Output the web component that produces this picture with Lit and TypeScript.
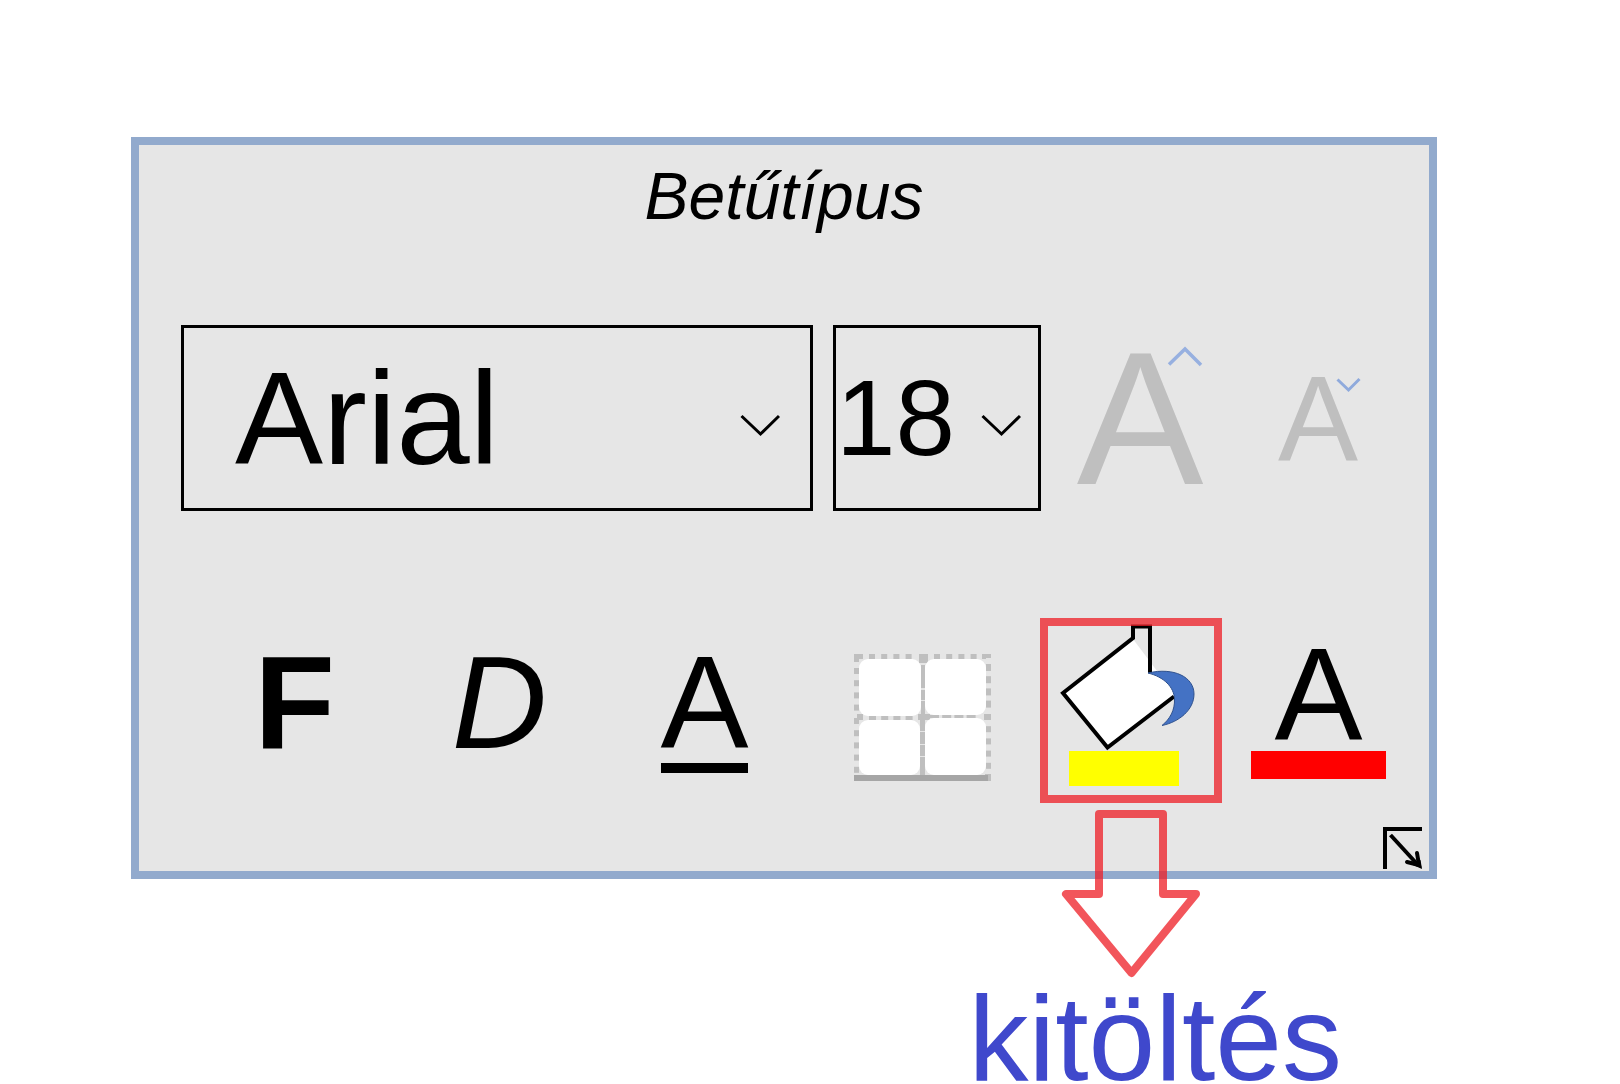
import { LitElement, html, css, svg } from "lit";
import { customElement, state } from "lit/decorators.js";

const range = (n: number) => Array.from({ length: n }, (_, i) => i);

@customElement("app-root")
export class AppRoot extends LitElement {
  static styles = css`
    :host {
      display: block;
      font-family: "Liberation Sans", Arial, sans-serif;
      color: #000;
      background: #fff;
    }
    .page {
      padding: 137px 183px 0 131px;
    }
    .panel {
      display: flex;
      flex-direction: column;
      padding: 13px 0 2px;
      border: 8px solid #92aacd;
      background: #e6e6e6;
    }
    .title {
      margin: 0 0 91px;
      text-align: center;
      font-size: 66px;
      line-height: 76px;
      font-weight: 400;
      font-style: italic;
    }
    .row {
      display: flex;
    }
    .fonts {
      gap: 20px;
      padding: 0 32px 0 42px;
      margin-bottom: 107px;
    }
    .styles {
      gap: 12px;
      padding: 0 28px 0 53px;
      margin-bottom: 24px;
    }
    .field {
      display: grid;
      height: 186px;
    }
    .field > * {
      grid-area: 1 / 1;
    }
    .family {
      flex: 1;
      font-size: 132px;
    }
    .size {
      width: 208px;
      font-size: 107px;
    }
    select {
      appearance: none;
      box-sizing: border-box;
      width: 100%;
      height: 100%;
      margin: 0;
      padding: 0;
      border: 3px solid #000;
      border-radius: 0;
      background: transparent;
      color: inherit;
      font: inherit;
    }
    .family select {
      padding-left: 51px;
    }
    .chevron {
      align-self: center;
      justify-self: end;
      margin-right: 20px;
      pointer-events: none;
    }
    .family .chevron {
      margin-right: 33px;
    }
    button {
      display: flex;
      flex-direction: column;
      align-items: center;
      margin: 0;
      padding: 0;
      border: 0;
      background: transparent;
      color: inherit;
      font: inherit;
      cursor: pointer;
    }
    .resize {
      position: relative;
      justify-content: center;
      width: 158px;
      color: #bfbfbf;
      font-size: 120px;
      line-height: 186px;
    }
    .grow {
      font-size: 190px;
    }
    .hat {
      position: absolute;
      top: 21px;
      right: 16px;
    }
    .resize:not(.grow) .hat {
      top: 52px;
      right: 36px;
    }
    .letters {
      display: grid;
      grid-template-columns: repeat(3, 1fr);
      flex: 1;
    }
    .colours {
      display: flex;
      gap: 14px;
    }
    .tool {
      padding-top: 37px;
      font-size: 132px;
      line-height: 96px;
    }
    .bold {
      font-weight: 700;
    }
    .italic {
      font-style: italic;
    }
    .bar {
      width: 87px;
      height: 10px;
      margin-top: 12px;
      background: #000;
    }
    .borders {
      width: 207px;
      padding-top: 36px;
    }
    .colour {
      width: 165px;
      padding-top: 29px;
    }
    .colour .bar {
      width: 135px;
      height: 28px;
      margin-top: 8px;
      background: #f00;
    }
    .marked {
      position: relative;
      width: 182px;
      height: 185px;
    }
    .marked::after {
      content: "";
      position: absolute;
      inset: 0;
      border: 8px solid rgba(237, 28, 36, 0.75);
      pointer-events: none;
    }
    .arrow {
      position: absolute;
      top: 100%;
      left: 19px;
      pointer-events: none;
    }
    .launcher {
      align-self: flex-end;
      margin-right: 7px;
    }
    svg {
      display: block;
    }
    .caption {
      margin: 116px 95px 0 0;
      text-align: right;
      color: #3f48cc;
      font-size: 120px;
      line-height: 86px;
    }
  `;

  @state() private family = "Arial";
  @state() private size = "18";

  private chevron() {
    return html`<svg class="chevron" width="40" height="38" viewBox="0 0 40 38" aria-hidden="true">
      <path d="M1.5 17 L20.5 35 L39 17" fill="none" stroke="#000" stroke-width="3" />
    </svg>`;
  }

  private bordersIcon() {
    return html`<svg width="137" height="127" viewBox="0 0 137 127" aria-hidden="true">
      <g fill="#bfbfbf">
        ${range(4).map(
          (i) => svg`
            <rect x=${15 + i * 12.2} y="0" width="6" height="5" />
            <rect x=${80 + i * 12.2} y="0" width="6" height="5" />
            <rect x=${15 + i * 12.2} y="62" width="7" height="4" />
            <rect x=${76 + i * 12.2} y="61" width="9" height="3" />
            <rect x="0" y=${14 + i * 12.2} width="5" height="6" />
            <rect x="132" y=${10 + i * 12.2} width="5" height="7" />`
        )}
        ${range(5).map(
          (i) => svg`
            <rect x="0" y=${64 + i * 12.2} width="5" height="6" />
            <rect x="132" y=${60 + i * 12.2} width="5" height="6" />`
        )}
        <path d="M0 0H9V5H5V8H0Z M128 0H137V4H132V5H128Z M3 60H9V66H3Z M130 60H137V66H130Z" />
        <path d="M65 0H74V9H65Z M67 11H71V34H67Z M67 36H71V46H67Z M67 47H71V60H67Z" />
        <path d="M64 60H76V66H71V77H66V66H64Z M66 78H71V90H66Z M66 91H71V102H66Z M66 103H71V121H66Z" />
        <path d="M131 120H137V127H134V121H131Z" />
      </g>
      <g fill="#fff">
        <rect x="5" y="5" width="62" height="57" rx="9" />
        <rect x="71" y="5" width="61" height="56" rx="9" />
        <rect x="5" y="66" width="61" height="55" rx="9" />
        <rect x="71" y="64" width="61" height="57" rx="9" />
      </g>
      <rect x="0" y="121" width="134" height="6" fill="#a6a6a6" />
    </svg>`;
  }

  private bucketIcon() {
    return html`<svg width="182" height="185" viewBox="0 0 182 185" aria-hidden="true">
      <path d="M93 21 L117 53 L134 62 L136 77 L68 130 L23 75 Z" fill="#fff" />
      <path d="M134 78.5 L67.5 129.5 L23 75 L93 20 V8.5 H110 V55" fill="none" stroke="#000" stroke-width="4" />
      <path
        d="M108 55 C134 49 154 59 154 76 C154 92 139 104 122 107.5 C130 101 135 92 134.5 81 C134 69 124 59 108 55 Z"
        fill="#4472c4" stroke="#2f528f" stroke-width="1" />
      <rect x="29" y="133" width="110" height="35" fill="#ff0" />
    </svg>`;
  }

  render() {
    return html`
      <main class="page">
        <section class="panel" aria-labelledby="title">
          <h2 class="title" id="title">Betűtípus</h2>

          <div class="row fonts">
            <div class="field family">
              <select
                aria-label="Betűtípus"
                .value=${this.family}
                @change=${(e: Event) => (this.family = (e.target as HTMLSelectElement).value)}
              >
                <option>Arial</option>
              </select>
              ${this.chevron()}
            </div>
            <div class="field size">
              <select
                aria-label="Betűméret"
                .value=${this.size}
                @change=${(e: Event) => (this.size = (e.target as HTMLSelectElement).value)}
              >
                <option>18</option>
              </select>
              ${this.chevron()}
            </div>
            <button class="resize grow" aria-label="Betűméret növelése">
              A
              <svg class="hat" width="36" height="21" viewBox="0 0 36 21" aria-hidden="true">
                <path d="M2 18.5 L18 3 L34 19" fill="none" stroke="#97b0e0" stroke-width="3.5" />
              </svg>
            </button>
            <button class="resize" aria-label="Betűméret csökkentése">
              A
              <svg class="hat" width="25" height="16" viewBox="0 0 25 16" aria-hidden="true">
                <path d="M1.5 2.5 L12.5 13 L23.5 2" fill="none" stroke="#8faadc" stroke-width="3" />
              </svg>
            </button>
          </div>

          <div class="row styles">
            <div class="letters">
              <button class="tool bold" aria-label="Félkövér">F</button>
              <button class="tool italic" aria-label="Dőlt">D</button>
              <button class="tool" aria-label="Aláhúzott">A<span class="bar"></span></button>
            </div>
            <div class="colours">
              <button class="borders" aria-label="Szegélyek">${this.bordersIcon()}</button>
              <div class="marked">
                <button aria-labelledby="caption">${this.bucketIcon()}</button>
                <svg class="arrow" width="144" height="176" viewBox="0 0 144 176" aria-hidden="true">
                  <path
                    d="M40 11 H104 V91 H137 L72.5 170 L7 91 H40 Z"
                    fill="none" stroke="#ed1c24" stroke-opacity="0.75"
                    stroke-width="8" stroke-linejoin="round" />
                </svg>
              </div>
              <button class="tool colour" aria-label="Betűszín">A<span class="bar"></span></button>
            </div>
          </div>

          <button class="launcher" aria-label="Betűtípus beállításai">
            <svg width="39" height="42" viewBox="0 0 39 42" aria-hidden="true">
              <path d="M2 42 V2 H39" fill="none" stroke="#000" stroke-width="4" />
              <g fill="none" stroke="#000" stroke-width="4">
                <path d="M7.5 8 L35 38" />
                <path d="M34 26 L36 38 L24 35" stroke-linecap="round" />
              </g>
              <path d="M37.5 33 L39 42 L30 38 Z" />
            </svg>
          </button>
        </section>
        <p class="caption" id="caption">kitöltés</p>
      </main>
    `;
  }
}
